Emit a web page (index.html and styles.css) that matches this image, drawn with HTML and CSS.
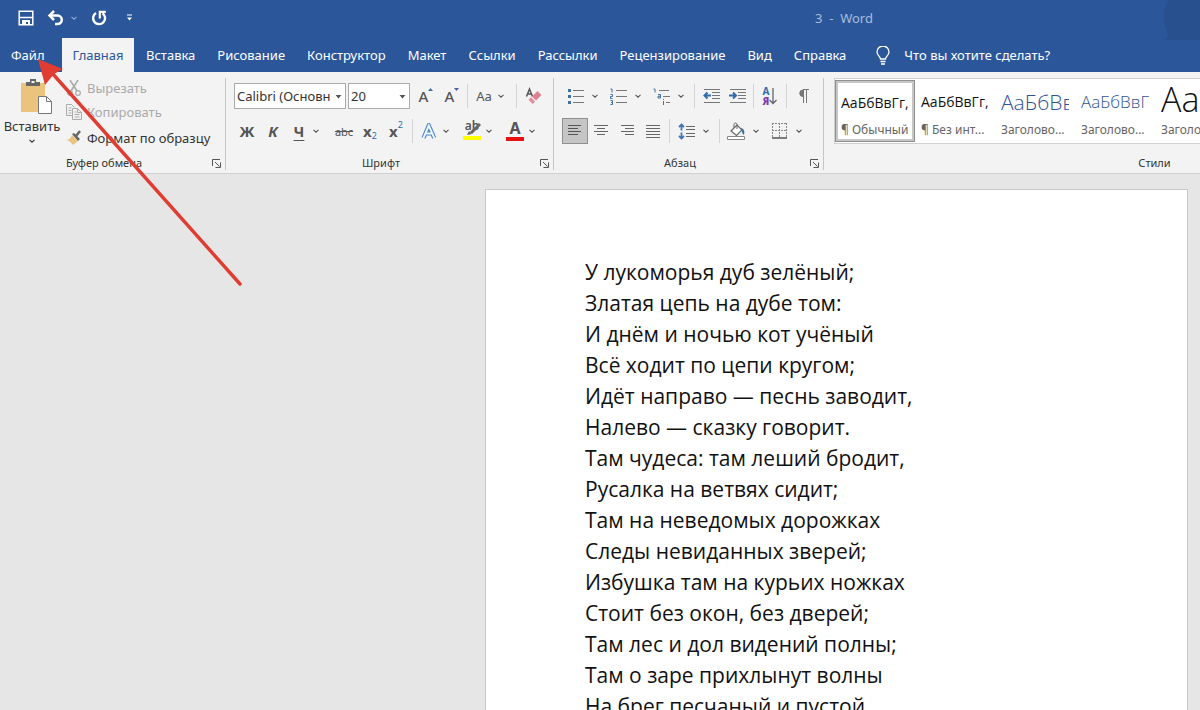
FILE: index.html
```
<!DOCTYPE html>
<html lang="ru">
<head>
  <meta charset="UTF-8" />
  <meta name="viewport" content="width=device-width, initial-scale=1" />
  <title>3 - Word</title>
  <link rel="stylesheet" href="styles.css">
</head>
<body>
  <svg class="defs" aria-hidden="true">
    <symbol id="chev" viewBox="0 0 8 8"><path d="M1.500 2.800 4 5.200 6.500 2.800" fill="none" stroke="currentColor" stroke-width="1.100"/></symbol>
    <symbol id="launch" viewBox="0 0 9 9"><path d="M.5 7V.5H8M3 3l4.500 4.500M8.500 3.500v5h-5" fill="none" stroke="#555"/></symbol>
  </svg>

  <header class="titlebar">
    <div class="quick">
      <button aria-label="Сохранить"><svg width="16" height="16" viewBox="0 0 16 16"><path d="M1.200 1.200h13.600v13.600H1.200z" fill="none" stroke="#fff" stroke-width="1.500"/><path d="M2 7.500h12" stroke="#fff" stroke-width="1.500"/><path d="M4 10h8v5h-2v-3H8v3H4z" fill="#fff"/></svg></button>
      <button class="undo" aria-label="Отменить"><svg width="17" height="16" viewBox="0 0 17 16"><path d="M3 5.500h7.500a4.300 4.300 0 0 1 0 8.600H8" fill="none" stroke="#fff" stroke-width="2.500"/><path d="M7 1 2.500 5.500 7 10" fill="none" stroke="#fff" stroke-width="2.500"/></svg><svg class="dim" width="8" height="8"><use href="#chev"/></svg></button>
      <button aria-label="Повторить"><svg width="16" height="16" viewBox="0 0 16 16"><path d="M5 3A6 6 0 1 0 11.500 3.200" fill="none" stroke="#fff" stroke-width="2.400"/><path d="M8.800 8.500V1.800h6" fill="none" stroke="#fff" stroke-width="2.200"/></svg></button>
      <button class="more" aria-label="Настройка панели"><svg width="7" height="8" viewBox="0 0 7 8"><path d="M1 1h5" stroke="#fff"/><path d="M1 3.500h5L3.500 6.500z" fill="#fff"/></svg></button>
    </div>
    <div class="doc-name">3&nbsp; -&nbsp; Word</div>
    <svg class="avatar" width="38" height="42" viewBox="0 0 38 42"><path d="M7 0h31v40H2c5-2 4-5 3-8-5-12-4-25 2-32z" fill="#28508e"/></svg>
  </header>

  <nav class="tabs">
    <button class="file">Файл</button>
    <button class="active">Главная</button>
    <button>Вставка</button>
    <button>Рисование</button>
    <button>Конструктор</button>
    <button>Макет</button>
    <button>Ссылки</button>
    <button>Рассылки</button>
    <button>Рецензирование</button>
    <button>Вид</button>
    <button>Справка</button>
    <button class="tell"><svg width="14" height="19" viewBox="0 0 14 19"><path d="M4.500 13c0-2.500-3.500-3.500-3.500-7a6 6 0 0 1 12 0c0 3.500-3.500 4.500-3.500 7zM4.500 15.500h5M5 18h4" fill="none" stroke="#fff" stroke-width="1.300"/></svg>Что вы хотите сделать?</button>
  </nav>

  <section class="ribbon">
    <div class="group clipboard">
      <div class="body">
        <button class="paste">
          <svg class="board" width="33" height="36" viewBox="0 0 33 36"><path d="M1 4h24v29H1z" fill="#eac37c"/><path d="M6 7V3h4V0h6v3h4v4z" fill="#666"/><path d="M11.500 2h3v2h-3z" fill="#f3f3f3"/><path d="M18.500 17.500h8l5 5v12h-13z" fill="#fff" stroke="#777"/><path d="M26.500 17.500v5h5" fill="none" stroke="#777"/></svg>
          Вставить
          <svg width="8" height="8"><use href="#chev"/></svg>
        </button>
        <div class="clip-list">
          <button disabled><svg width="16" height="16" viewBox="0 0 16 16"><path d="M4 0l7 11M12 0 5 11" fill="none" stroke="#aaa" stroke-width="1.600"/><circle cx="4" cy="13" r="2.300" fill="none" stroke="#aaa" stroke-width="1.200"/><circle cx="12" cy="13" r="2.300" fill="none" stroke="#aaa" stroke-width="1.200"/></svg>Вырезать</button>
          <button disabled><svg width="16" height="16" viewBox="0 0 16 16"><path d="M6 11.500H.5V.5h5l3 3M2.500 4h3M2.500 6.500h3M2.500 9h3" fill="none" stroke="#aaa"/><path d="M6.500 4.500h5l4 4v7h-9zM11.500 4.500v4h4M8.500 8h2M8.500 10.500h5M8.500 13h5" fill="none" stroke="#aaa"/></svg>Копировать</button>
          <button><svg width="16" height="16" viewBox="0 0 16 16"><path d="m6 5 6 6-5 4c-1-2-5-5-7-5 3 0 5-2 6-5z" fill="#eac37c"/><path d="m6 4 2-1 6 6-2 2z" fill="#666"/><path d="m10 6 4-5" stroke="#666" stroke-width="2.500"/></svg>Формат по образцу</button>
        </div>
      </div>
      <div class="foot"><span>Буфер обмена</span><button aria-label="Параметры буфера"><svg width="9" height="9"><use href="#launch"/></svg></button></div>
    </div>

    <div class="group font">
      <div class="body rows">
        <div class="row">
          <div class="combo name"><select aria-label="Шрифт"><option>Calibri (Основн</option></select><svg width="7" height="4" viewBox="0 0 7 4"><path d="M.5 0h6L3.500 3.500z" fill="#555"/></svg></div>
          <div class="combo size"><select aria-label="Размер шрифта"><option>20</option></select><svg width="7" height="4" viewBox="0 0 7 4"><path d="M.5 0h6L3.500 3.500z" fill="#555"/></svg></div>
          <button class="tool grow" aria-label="Увеличить размер">A<svg width="5" height="3" viewBox="0 0 5 3"><path d="M0 3 2.500 0 5 3z" fill="#41719c"/></svg></button>
          <button class="tool grow" aria-label="Уменьшить размер">A<svg width="5" height="3" viewBox="0 0 5 3"><path d="M0 0h5L2.500 3z" fill="#4a5fa5"/></svg></button>
          <i class="sep"></i>
          <button class="tool split case"><span>Aa</span><svg width="8" height="8"><use href="#chev"/></svg></button>
          <i class="sep"></i>
          <button class="tool" aria-label="Очистить формат"><svg width="17" height="18" viewBox="0 0 17 18"><path d="M1.500 9.500 4.500 2 7.500 9.500M2.500 7h4" fill="none" stroke="#555" stroke-width="1.500"/><path d="m12.500 4 4 4-5.500 5.500-4-4z" fill="#e0808f"/><path d="m6 10.300 4.200 4.200-2.500 2.500-4.200-4.200z" fill="#e58e9b"/></svg></button>
        </div>
        <div class="row">
          <button class="tool letter">Ж</button>
          <button class="tool letter italic">К</button>
          <button class="tool split"><span class="letter under">Ч</span><svg width="8" height="8"><use href="#chev"/></svg></button>
          <button class="tool strike">abc</button>
          <button class="tool letter">x<sub>2</sub></button>
          <button class="tool letter">x<sup>2</sup></button>
          <i class="sep"></i>
          <button class="tool split" aria-label="Эффекты текста"><span><svg width="16" height="17" viewBox="0 0 16 17"><path d="M2.500 15 7.800 2.500 13.200 15M4.500 10.500h7" fill="none" stroke="#4a86c5" stroke-width="4.200"/><path d="M2.200 15.600 7.800 2.500 13.500 15.600M4.500 10.500h7" fill="none" stroke="#eef5fc" stroke-width="2"/></svg></span><svg width="8" height="8"><use href="#chev"/></svg></button>
          <button class="tool split"><span class="mark">ab<svg width="18" height="19" viewBox="0 0 18 19"><path d="M17 3 8 12" stroke="#666" stroke-width="3"/><path d="m6 10 3 3-5 1z" fill="#666"/><path d="M0 15h18v4H0z" fill="#ff0"/></svg></span><svg width="8" height="8"><use href="#chev"/></svg></button>
          <button class="tool split"><span class="color">A</span><svg width="8" height="8"><use href="#chev"/></svg></button>
        </div>
      </div>
      <div class="foot"><span>Шрифт</span><button aria-label="Параметры шрифта"><svg width="9" height="9"><use href="#launch"/></svg></button></div>
    </div>

    <div class="group para">
      <div class="body rows">
        <div class="row">
          <button class="tool split" aria-label="Маркеры"><span><svg width="17" height="17" viewBox="0 0 17 17"><path d="M6 2.500h11M6 8.500h11M6 14.500h11" stroke="#777"/><path d="M1 1h3v3H1zM1 7h3v3H1zM1 13h3v3H1z" fill="#41719c"/></svg></span><svg width="8" height="8"><use href="#chev"/></svg></button>
          <button class="tool split" aria-label="Нумерация"><span><svg width="17" height="17" viewBox="0 0 17 17"><path d="M6 2.500h11M6 8.500h11M6 14.500h11" stroke="#777"/><path d="M.5 1H2v3.500M.5 6.500h2v2h-2v2h2M.5 12.500h2v4h-2M1 14.500h1" fill="none" stroke="#41719c"/></svg></span><svg width="8" height="8"><use href="#chev"/></svg></button>
          <button class="tool split" aria-label="Многоуровневый список"><span><svg width="17" height="17" viewBox="0 0 17 17"><path d="M6 2.500h10M10 8.500h7M13 14.500h4" stroke="#777"/><path d="M.5 1H2v3.500M5 6.500h2.500V10H5V8.200h2.500M10.500 11v1M10.500 13v4" fill="none" stroke="#41719c"/></svg></span><svg width="8" height="8"><use href="#chev"/></svg></button>
          <i class="sep"></i>
          <button class="tool" aria-label="Уменьшить отступ"><svg width="17" height="16" viewBox="0 0 17 16"><path d="M1 1.500h16M9 4.500h8M9 7.500h8M9 10.500h8M1 14.500h16" stroke="#777"/><path d="M8 7.500H2M4.500 4.500l-3 3 3 3" fill="none" stroke="#2f6cab" stroke-width="2"/></svg></button>
          <button class="tool" aria-label="Увеличить отступ"><svg width="17" height="16" viewBox="0 0 17 16"><path d="M1 1.500h16M9 4.500h8M9 7.500h8M9 10.500h8M1 14.500h16" stroke="#777"/><path d="M0 7.500h6M4 4.500l3 3-3 3" fill="none" stroke="#2f6cab" stroke-width="2"/></svg></button>
          <i class="sep"></i>
          <button class="tool sort"><span>А<b>Я</b></span><svg width="8" height="17" viewBox="0 0 8 17"><path d="M4 0v16M.5 12 4 15.500 7.500 12" fill="none" stroke="#666" stroke-width="1.300"/></svg></button>
          <i class="sep"></i>
          <button class="tool" aria-label="Знаки абзаца"><svg width="11" height="14" viewBox="0 0 11 14"><path d="M5 1a3 3 0 0 0 0 6.500z" fill="#777" stroke="#777"/><path d="M5 .5h6M5.500 1v13M8.500 1v13" stroke="#777"/></svg></button>
        </div>
        <div class="row">
          <button class="tool on" aria-label="По левому краю"><svg width="14" height="14" viewBox="0 0 14 14"><path d="M0 1.500h13M0 4.500h10M0 7.500h13M0 10.500h10" stroke="#555"/></svg></button>
          <button class="tool" aria-label="По центру"><svg width="14" height="14" viewBox="0 0 14 14"><path d="M0 1.500h14M3 4.500h8M0 7.500h14M3 10.500h8" stroke="#666"/></svg></button>
          <button class="tool" aria-label="По правому краю"><svg width="14" height="14" viewBox="0 0 14 14"><path d="M1 1.500h13M5 4.500h9M1 7.500h13M5 10.500h9" stroke="#666"/></svg></button>
          <button class="tool" aria-label="По ширине"><svg width="14" height="14" viewBox="0 0 14 14"><path d="M0 1.500h14M0 4.500h14M0 7.500h14M0 10.500h14M0 13.500h14" stroke="#666"/></svg></button>
          <i class="sep"></i>
          <button class="tool split" aria-label="Интервал"><span><svg width="17" height="17" viewBox="0 0 17 17"><path d="M8 3.500h9M8 6.500h9M8 10.500h9M8 13.500h9" stroke="#666"/><path d="M3.500 1.500v6M1 4l2.500-2.500L6 4M3.500 9.500v6M1 13l2.500 2.500L6 13" fill="none" stroke="#3f77bb" stroke-width="1.800"/></svg></span><svg width="8" height="8"><use href="#chev"/></svg></button>
          <i class="sep"></i>
          <button class="tool split" aria-label="Заливка"><span><svg width="19" height="19" viewBox="0 0 19 19"><path d="m4 9 6-6 5 5-5.500 5.500z" fill="#fff" stroke="#666" stroke-width="1.200"/><path d="M7 6V2.500C7 .5 10 .5 10 2.500V7" fill="none" stroke="#666"/><path d="M13 6c4 0 5 3 4 7-2-1-2-3-2-5z" fill="#41719c"/><path d="M.5 14.500h17v3H.5z" fill="#fff" stroke="#888"/></svg></span><svg width="8" height="8"><use href="#chev"/></svg></button>
          <button class="tool split" aria-label="Границы"><span><svg width="15" height="16" viewBox="0 0 15 16"><path d="M.5 0v14M14.500 0v14M7.500 0v14M0 .5h15M0 7.500h15" stroke="#888" stroke-dasharray="2 1"/><path d="M0 15h15" stroke="#555" stroke-width="1.500"/></svg></span><svg width="8" height="8"><use href="#chev"/></svg></button>
        </div>
      </div>
      <div class="foot"><span>Абзац</span><button aria-label="Параметры абзаца"><svg width="9" height="9"><use href="#launch"/></svg></button></div>
    </div>

    <div class="group styles">
      <div class="body gallery">
        <button class="style picked"><span class="sample">АаБбВвГг,</span><span class="caption">¶ Обычный</span></button>
        <button class="style"><span class="sample">АаБбВвГг,</span><span class="caption">¶ Без инт...</span></button>
        <button class="style"><span class="sample h1">АаБбВв</span><span class="caption">Заголово...</span></button>
        <button class="style"><span class="sample h2">АаБбВвГ</span><span class="caption">Заголово...</span></button>
        <button class="style"><span class="sample big">Ааб</span><span class="caption">Заголово...</span></button>
      </div>
      <div class="foot"><span>Стили</span></div>
    </div>
  </section>

  <main class="workspace">
    <article class="page">
      <p>У лукоморья дуб зелёный;</p>
      <p>Златая цепь на дубе том:</p>
      <p>И днём и ночью кот учёный</p>
      <p>Всё ходит по цепи кругом;</p>
      <p>Идёт направо — песнь заводит,</p>
      <p>Налево — сказку говорит.</p>
      <p>Там чудеса: там леший бродит,</p>
      <p>Русалка на ветвях сидит;</p>
      <p>Там на неведомых дорожках</p>
      <p>Следы невиданных зверей;</p>
      <p>Избушка там на курьих ножках</p>
      <p>Стоит без окон, без дверей;</p>
      <p>Там лес и дол видений полны;</p>
      <p>Там о заре прихлынут волны</p>
      <p>На брег песчаный и пустой,</p>
    </article>
  </main>

  <svg class="pointer" width="250" height="290" viewBox="0 0 250 290" aria-hidden="true"><path d="M52 73 240 284" stroke="#e03c31" stroke-width="3.400" stroke-linecap="round"/><path d="M38 59 63 69 54 74 45 85z" fill="#e03c31"/></svg>
</body>
</html>
```
FILE: styles.css
```
* {
  box-sizing: border-box;
}
body {
  margin: 0;
  height: 100vh;
  display: flex;
  flex-direction: column;
  overflow: hidden;
  position: relative;
  background: #e6e6e6;
  font-family: "Noto Sans", "Open Sans", sans-serif;
  font-size: 13px;
  color: #333;
}
button {
  font: inherit;
  color: inherit;
  background: none;
  border: none;
  padding: 0;
  white-space: nowrap;
}
svg {
  display: block;
  flex: none;
}
.defs {
  position: absolute;
  width: 0;
  height: 0;
}

/* title bar */
.titlebar {
  position: relative;
  height: 38px;
  flex: none;
  display: grid;
  grid-template-columns: 1fr auto 1fr;
  align-items: center;
  padding-bottom: 2px;
  background: #2b579a;
}
.quick {
  display: flex;
  align-items: center;
  gap: 13px;
  padding-left: 18px;
}
.quick button {
  display: flex;
  align-items: center;
  gap: 6px;
}
.dim {
  color: #8fabd6;
}
.quick .more {
  margin-left: 6px;
}
.doc-name {
  color: #a9bcdb;
  padding-left: 488px;
}
.avatar {
  position: absolute;
  top: 0;
  right: 0;
}

/* tabs */
.tabs {
  flex: none;
  display: flex;
  height: 34px;
  background: #2b579a;
  color: #fff;
}
.tabs button {
  padding: 0 11px;
}
.tabs .file {
  width: 62px;
  text-align: left;
}
.tabs .active {
  width: 72px;
  padding: 0;
  margin-right: 1px;
  background: #f3f3f3;
  color: #2b579a;
}
.tabs .tell {
  display: flex;
  align-items: center;
  gap: 14px;
  margin-left: 8px;
}

/* ribbon */
.ribbon {
  flex: none;
  display: flex;
  overflow: hidden;
  background: #f3f3f3;
  border-bottom: 1px solid #d0d0d0;
  padding: 6px 0 3px;
}
.group {
  flex: none;
  display: flex;
  flex-direction: column;
  border-right: 1px solid #c6c6c6;
}
.body {
  display: flex;
  height: 78px;
}
.foot {
  display: flex;
  align-items: center;
  height: 14px;
  font-size: 11px;
  line-height: 14px;
}
.foot span {
  flex: 1;
  text-align: center;
}
.foot button {
  width: 14px;
  margin-right: 3px;
}
.foot svg {
  margin-left: 4px;
}
.clipboard {
  width: 226px;
}
.paste {
  width: 64px;
  display: flex;
  flex-direction: column;
  align-items: center;
  justify-content: space-between;
  padding: 1px 0 11px;
  line-height: 14px;
}
.board {
  margin-left: 8px;
}
.clip-list {
  display: flex;
  flex-direction: column;
  gap: 2px;
  padding-left: 2px;
}
.clip-list button {
  display: flex;
  align-items: center;
  gap: 5px;
  height: 24px;
  line-height: 18px;
}
.clip-list button:first-child {
  height: 20px;
}
.clip-list button:disabled {
  color: #aaa;
}
.font {
  width: 328px;
  padding-left: 8px;
}
.para {
  width: 270px;
  padding-left: 8px;
}
.font .foot,
.para .foot {
  margin-left: -8px;
}
.rows {
  flex-direction: column;
  gap: 9px;
  padding-top: 5px;
}
.row {
  display: flex;
  align-items: center;
  height: 26px;
}
.combo {
  position: relative;
  margin-right: 2px;
}
.combo select {
  width: 100%;
  height: 26px;
  appearance: none;
  border: 1px solid #ababab;
  border-radius: 0;
  background: #fff;
  padding: 0 0 0 2px;
  font: inherit;
  color: #333;
}
.combo svg {
  position: absolute;
  right: 4px;
  top: 12px;
  pointer-events: none;
}
.combo.name {
  width: 112px;
}
.combo.size {
  width: 62px;
}
.tool {
  width: 26px;
  height: 26px;
  display: flex;
  align-items: center;
  justify-content: center;
  color: #555;
}
.tool.on {
  background: #c5c5c5;
  border: 1px solid #8f8f8f;
}
.split {
  width: 43px;
  justify-content: flex-start;
}
.split > span {
  width: 26px;
  display: flex;
  justify-content: center;
}
.para .split > span {
  margin-right: 3px;
}
.case {
  width: 42px;
}
.grow {
  font-size: 15px;
  font-weight: 500;
  padding-left: 2px;
}
.grow svg {
  align-self: flex-start;
  margin-top: 5px;
}
.sep {
  width: 1px;
  height: 24px;
  margin: 0 3px;
  background: #d4d4d4;
}
.letter {
  font-size: 15px;
  font-weight: 700;
}
.italic {
  font-style: italic;
}
.under {
  text-decoration: underline;
  text-underline-offset: 3px;
}
.strike {
  margin-left: 2px;
  font-size: 11px;
  text-decoration: line-through;
}
.letter sub,
.letter sup {
  font-size: 9px;
  font-weight: 400;
  color: #2f6cab;
  line-height: 10px;
}
.letter sub {
  align-self: flex-end;
  padding-bottom: 3px;
}
.letter sup {
  align-self: flex-start;
  padding-top: 2px;
}
.split .mark {
  position: relative;
  height: 24px;
  font-size: 12px;
  font-weight: 600;
  line-height: 14px;
}
.mark svg {
  position: absolute;
  left: 4px;
  top: 2px;
}
.split .color {
  width: 18px;
  height: 20px;
  margin: 0 4px;
  border-bottom: 4px solid #e81010;
  font-size: 16px;
  font-weight: 700;
  line-height: 15px;
}
.sort {
  font-size: 10px;
  font-weight: 700;
  line-height: 10px;
  color: #2f6cab;
}
.sort b {
  display: block;
  color: #7b3fb0;
}

/* styles gallery */
.styles {
  flex: 1 0 652px;
  padding-left: 10px;
}
.styles .body {
  height: 66px;
  margin-bottom: 12px;
  border: 1px solid #d0d0d0;
  background: #fff;
}
.style {
  flex: none;
  width: 80px;
  padding: 1px 6px;
  display: flex;
  flex-direction: column;
  text-align: left;
  overflow: hidden;
}
.picked {
  margin: 1px 0;
  padding: 0 3px;
  outline: 1px solid #8f8f8f;
  outline-offset: -1px;
  border: 3px solid #c6c6c6;
}
.sample {
  width: 68px;
  height: 41px;
  overflow: hidden;
  line-height: 44px;
  color: #111;
  font-family: "Open Sans", sans-serif;
  font-size: 14px;
}
.picked .sample {
  height: 38px;
  line-height: 39px;
}
.caption {
  font-size: 12px;
  line-height: 18px;
  color: #666;
}
.h1 {
  font-size: 21px;
  font-weight: 300;
  color: #2f5496;
}
.h2 {
  font-size: 17px;
  font-weight: 300;
  color: #2f5496;
}
.big {
  font-size: 34px;
  font-weight: 300;
  line-height: 38px;
}

/* document */
.workspace {
  flex: 1;
  min-height: 0;
  display: flex;
  padding: 15px 12px 0 485px;
}
.page {
  flex: 1;
  background: #fff;
  border: 1px solid #c8c8c8;
  border-bottom: none;
  padding: 67px 99px 0;
  overflow: hidden;
  font-family: "Open Sans", sans-serif;
  font-size: 21px;
  line-height: 31px;
  color: #111;
}
.page p {
  margin: 0;
  white-space: nowrap;
}
.pointer {
  position: absolute;
  left: 0;
  top: 0;
  pointer-events: none;
}
```
